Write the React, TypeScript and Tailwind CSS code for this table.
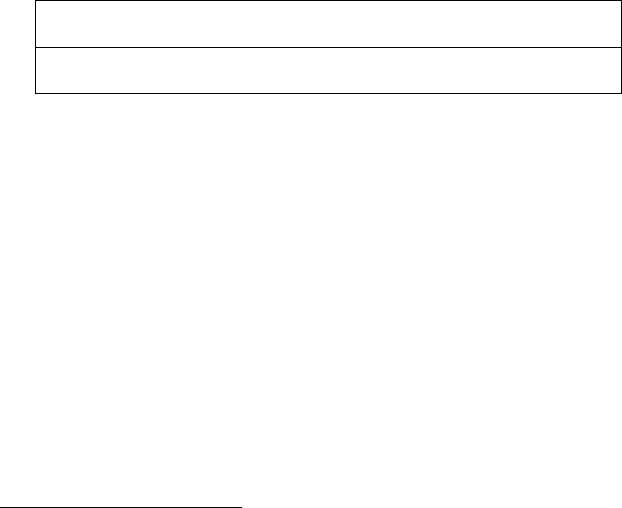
export default function App() {
  return (
    <div className="flex h-[508px] w-[622px] flex-col justify-between bg-white" style={{ fontFamily: '"Liberation Serif", serif' }}>
      <div className="ml-[35px] w-[587px] border border-black">
        <div className="h-[46px]" />
        <div className="h-[46px] border-t border-black" />
      </div>
      <div className="h-px w-[242px] bg-black" />
    </div>
  );
}
